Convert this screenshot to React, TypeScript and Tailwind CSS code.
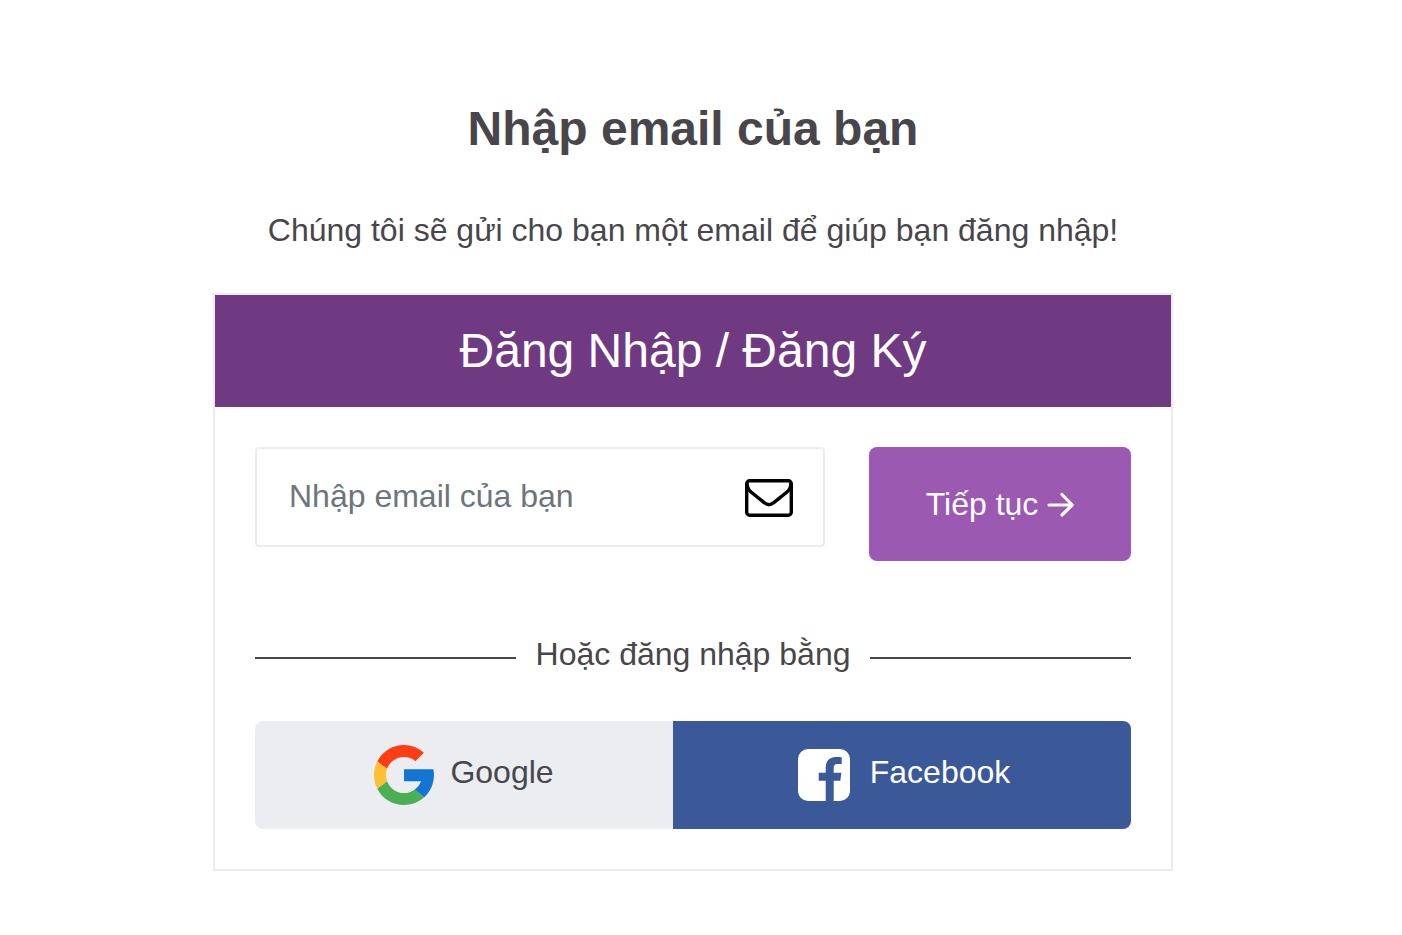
import { useState } from "react";

const MailIcon = () => (
  <svg
    viewBox="0 0 48 38"
    className="h-[38px] w-12 shrink-0"
    fill="none"
    stroke="#000"
    strokeWidth="3.4"
    aria-hidden="true"
  >
    <rect x="1.700" y="1.700" width="44.600" height="34.600" rx="3" />
    <path d="M2 4c0 4 1.500 7 4 9l13.500 10.800c3.200 2.700 5.800 2.700 9 0L42 13c2.500-2 4-5 4-9" />
  </svg>
);

const ArrowIcon = () => (
  <svg
    viewBox="0 0 28 26"
    className="h-[26px] w-7"
    fill="none"
    stroke="currentColor"
    strokeWidth="3.2"
    strokeLinecap="round"
    strokeLinejoin="round"
    aria-hidden="true"
  >
    <path d="M3 14h23M16 3.500L26.200 14 16 24" />
  </svg>
);

const GoogleIcon = () => (
  <svg viewBox="0 0 48 48" className="size-[60px]" aria-hidden="true">
    <path fill="#FF3D14" d="M2.600 13.200C6.600 5.300 14.700 0 24 0c6.100 0 11.700 2.300 15.900 6.100l-6.800 6.800C30.700 10.800 27.500 9.600 24 9.600c-6.200 0-11.500 3.900-13.500 9.400z" />
    <path fill="#FFC034" d="M2.600 13.200C.9 16.400 0 20.100 0 24c0 3.900.9 7.600 2.600 10.800l8-6C9.900 27.300 9.600 25.700 9.600 24c0-1.800.3-3.400.9-5z" />
    <path fill="#4CAF54" d="M24 48c6.200 0 11.800-2.400 16.100-6.200l-7.500-6.300c-2.400 1.800-5.400 2.900-8.600 2.900-6.200 0-11.500-4-13.500-9.500l-7.900 6.100C6.600 42.800 14.600 48 24 48z" />
    <path fill="#1276D2" d="M47.500 19.300H24v9.600h13.600c-1 2.700-2.700 5-5 6.600l7.500 6.300C39.600 42.300 48 36 48 24c0-1.600-.2-3.200-.5-4.700z" />
  </svg>
);

const FacebookIcon = () => (
  <svg viewBox="-4 -4 60 60" className="size-[60px]" aria-hidden="true">
    <path
      fill="#fff"
      d="M10 0h32a10 10 0 0 1 10 10v32a10 10 0 0 1-10 10h-6.300V31.700h6.600l1.100-8h-7.700v-4.500c0-2.800 1-4.200 4.300-4.200h3.700V8.200c-1-.2-3-.3-5-.3-7 0-11 3.800-11 10.600v5.200h-7v8h7V52H10A10 10 0 0 1 0 42V10A10 10 0 0 1 10 0z"
    />
  </svg>
);

const App = () => {
  const [email, setEmail] = useState("");
  return (
    <main className="w-full bg-white pt-[100px] pr-8 pb-16 pl-4 font-['Liberation_Sans',Arial,sans-serif] text-[32px] text-[#48464b]">
      <h1 className="text-center text-[48px] leading-[58px] font-bold">
        Nhập email của bạn
      </h1>
      <p className="mt-12 text-center leading-12">
        Chúng tôi sẽ gửi cho bạn một email để giúp bạn đăng nhập!
      </p>
      <section className="mx-auto mt-[39px] max-w-[960px] border-2 border-[#ebebf0]">
        <h2 className="bg-[#703a83] py-5 text-center text-[48px] leading-[72px] text-white">
          Đăng Nhập / Đăng Ký
        </h2>
        <div className="p-10">
          <form
            className="flex items-start gap-11"
            onSubmit={(e) => e.preventDefault()}
          >
            <label className="flex h-[100px] min-w-0 flex-1 items-center rounded border-2 border-[#ebebf0] pt-0.5 pr-[30px] pl-8">
              <input
                type="email"
                aria-label="Nhập email của bạn"
                placeholder="Nhập email của bạn"
                value={email}
                onChange={(e) => setEmail(e.target.value)}
                className="min-w-0 flex-1 pb-1 leading-12 outline-none placeholder:text-[#6c757d]"
              />
              <MailIcon />
            </label>
            <button
              type="submit"
              className="flex h-[114px] w-[262px] items-center justify-center gap-2 rounded-lg bg-[#9b59b2] text-white"
            >
              Tiếp tục
              <ArrowIcon />
            </button>
          </form>
          <div className="mt-[74px] flex items-center gap-5">
            <span className="h-[2px] flex-1 bg-[#48464b]" />
            <span className="pb-2 leading-[38px]">Hoặc đăng nhập bằng</span>
            <span className="h-[2px] flex-1 bg-[#48464b]" />
          </div>
          <div className="mt-10 flex h-[108px] overflow-hidden rounded-lg">
            <button
              type="button"
              className="flex w-[418px] items-center justify-center gap-4 bg-[#ebedf0]"
            >
              <GoogleIcon />
              <span className="pb-1.5">Google</span>
            </button>
            <button
              type="button"
              className="flex flex-1 items-center justify-center gap-4 bg-[#3b5998] text-white"
            >
              <FacebookIcon />
              <span className="pb-1.5">Facebook</span>
            </button>
          </div>
        </div>
      </section>
    </main>
  );
};

export default App;
